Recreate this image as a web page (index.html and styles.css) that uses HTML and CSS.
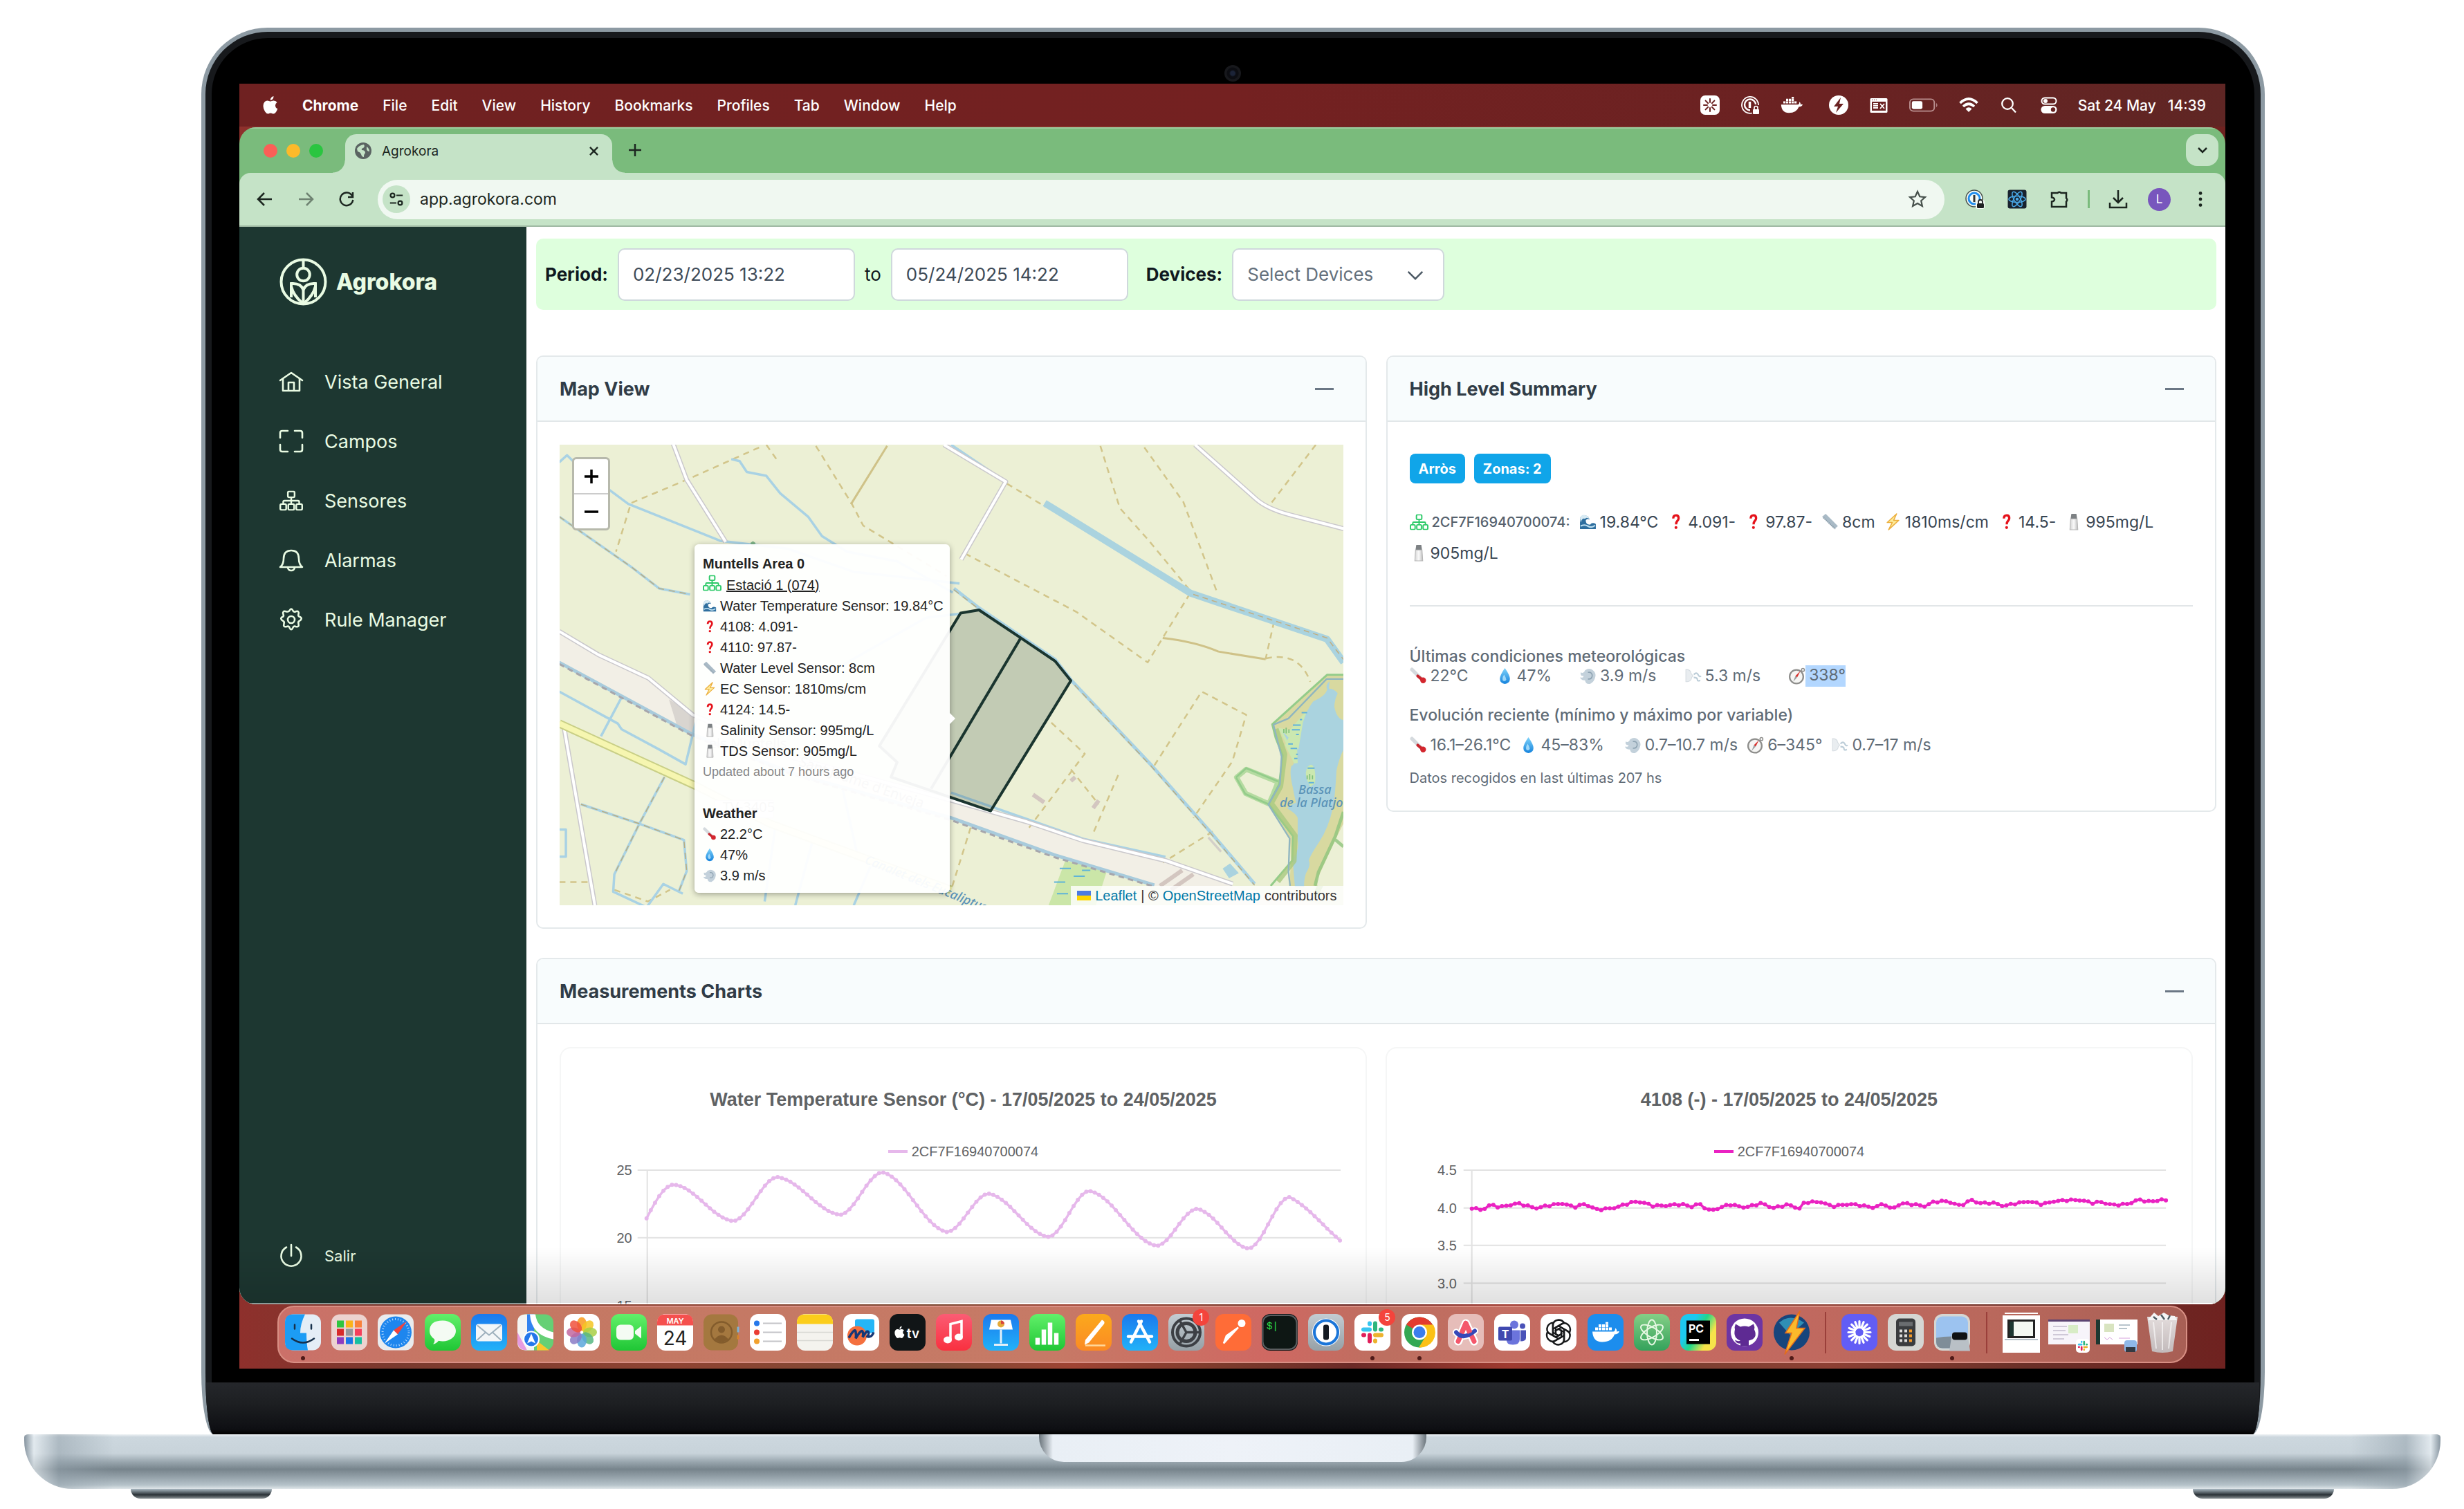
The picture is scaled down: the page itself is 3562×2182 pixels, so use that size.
FILE: index.html
```html
<!DOCTYPE html>
<html lang="es">
<head>
<meta charset="utf-8">
<title>Agrokora</title>
<link rel="stylesheet" href="styles.css">
</head>
<body>
<svg class="sprite" aria-hidden="true">
  <defs>
    <linearGradient id="g-drop" x1="0" y1="0" x2="0" y2="1"><stop offset="0" stop-color="#7fd3fa"/><stop offset="1" stop-color="#1583dd"/></linearGradient>
    <linearGradient id="g-metal" x1="0" y1="0" x2="1" y2="0"><stop offset="0" stop-color="#d4d4d4"/><stop offset=".5" stop-color="#fafafa"/><stop offset="1" stop-color="#bdbdbd"/></linearGradient>
    <linearGradient id="g-bin" x1="0" y1="0" x2="0" y2="1"><stop offset="0" stop-color="#e9e9ea"/><stop offset="1" stop-color="#c5c4c6"/></linearGradient>
    <symbol id="i-sitemap" viewBox="0 0 28 24"><g fill="none" stroke="currentColor" stroke-width="2"><rect x="10" y="1" width="8" height="7" rx="1.5"/><rect x="1" y="16" width="7" height="7" rx="1.5"/><rect x="10.500" y="16" width="7" height="7" rx="1.500"/><rect x="20" y="16" width="7" height="7" rx="1.500"/><path d="M14 8v8M4.500 16v-2.500q0-1.500 1.500-1.500h16q1.500 0 1.500 1.500V16"/></g></symbol>
    <symbol id="e-wave" viewBox="0 0 24 24"><path d="M1 8 Q2 2 8 3 Q14 4 14 9 Q11 7 9 10 Q9 16 15 16 Q18 12 23 15 L23 22 H1z" fill="#2f6f9f"/><path d="M1 7 Q3 1 9 3 Q13 4 14 8 Q10 5 8 8 Q4 6 2 13z" fill="#d8ebf4"/><path d="M2 18 Q7 15 12 18 T22 17" stroke="#bfe0f0" stroke-width="2" fill="none"/></symbol>
    <symbol id="e-q" viewBox="0 0 24 24"><path d="M8.500 7.500 Q8.500 3 12.500 3 Q16 3 16 7 Q16 9 14 11 Q12.500 12.500 12.500 15.500" fill="none" stroke="#e5121b" stroke-width="3.200"/><circle cx="12.300" cy="20" r="2" fill="#e5121b"/></symbol>
    <symbol id="e-ruler" viewBox="0 0 24 24"><path d="M1 5 L6 1 L23 18 L18 22z" fill="#a9bac6"/><path d="M3 6.500 L19.500 22" stroke="#8496a3" stroke-width="2" stroke-dasharray="1 1.500"/></symbol>
    <symbol id="e-bolt" viewBox="0 0 24 24"><path d="M17 1 L4 13 H11 L6 23 L20 10 H13z" fill="#fdeb9a" stroke="#ecb040" stroke-width="1.500" stroke-linejoin="round"/></symbol>
    <symbol id="e-salt" viewBox="0 0 24 24"><path d="M9 1 H16 L17 8 H8z" fill="#7d8184"/><path d="M8 8 H17 L18 23 H7z" fill="url(#g-metal)" stroke="#b5b5b5"/></symbol>
    <symbol id="e-thermo" viewBox="0 0 24 24"><path d="M3 3 L16 16" stroke="#d5dade" stroke-width="5" stroke-linecap="round"/><path d="M11 12 L17 17" stroke="#c9252d" stroke-width="4" stroke-linecap="round"/><circle cx="18.500" cy="18" r="4" fill="#d3262e"/></symbol>
    <symbol id="e-drop" viewBox="0 0 24 24"><path d="M12 1 Q19 11 19 16 A7 7 0 0 1 5 16 Q5 11 12 1z" fill="url(#g-drop)"/><path d="M11 10 Q8 14 9 18 Q12 21 14 17 Q13 13 11 10z" fill="#c9efff" opacity=".7"/></symbol>
    <symbol id="e-wind" viewBox="0 0 24 24"><path d="M8 4 Q14 0 19 4 Q24 8 22 14 Q21 20 15 23 Q9 24 8 18 Q2 18 1 14 Q6 15 6 12 Q1 12 2 7 Q6 9 8 4z" fill="#c3d1db"/><path d="M12 7 Q18 6 18 12 Q17 17 12 16" fill="none" stroke="#8ea3b2" stroke-width="1.500"/></symbol>
    <symbol id="e-face" viewBox="0 0 24 24"><path d="M2 3 Q9 3 9 8 L12 12 L10 14 Q10 19 4 20 H2z" fill="#e9edf0" stroke="#d5dce1"/><path d="M13 10 Q17 6 19 10 Q21 14 23 12 M13 14 Q18 14 18 17 T22 18" fill="none" stroke="#bccdd8" stroke-width="2"/></symbol>
    <symbol id="e-compass" viewBox="0 0 24 24"><circle cx="11.500" cy="13" r="9.500" fill="#f6f6f4" stroke="#8e8e8c" stroke-width="2.200"/><path d="M17 5 L12.500 14 L10 12z" fill="#d8302c"/><path d="M7 20 L12.500 14 L10 12z" fill="#9da0a2"/><circle cx="20.500" cy="3.500" r="2" fill="none" stroke="#8e8e8c" stroke-width="1.500"/></symbol>
    <symbol id="i-slack" viewBox="0 0 40 40"><g stroke-width="6" stroke-linecap="round" fill="none"><path d="M16 7v1M7 16h9" stroke="#36c5f0"/><path d="M24 7v9M32 16h1" stroke="#2eb67d"/><path d="M24 24h9M24 32v1" stroke="#ecb22e"/><path d="M16 24v9M7 24h1" stroke="#e01e5a"/></g></symbol>
    <symbol id="i-burst" viewBox="0 0 40 40"><g stroke="currentColor" stroke-width="3.200" stroke-linecap="round"><path d="M20 4v9M20 27v9M4 20h9M27 20h9M8.700 8.700l6.300 6.300M25 25l6.300 6.300M31.300 8.700L25 15M15 25l-6.300 6.300M13.900 5.200l3.400 8.300M22.700 26.500l3.400 8.300M5.200 13.900l8.300 3.400M26.500 22.700l8.300 3.400M26.100 5.200l-3.400 8.300M17.300 26.500l-3.400 8.300M34.800 13.900l-8.300 3.400M13.500 22.700l-8.300 3.400"/></g></symbol>
    <symbol id="i-docker" viewBox="0 0 40 30"><path d="M1 14h30q3 0 3-5q3 2 2 5q3-1 4 0q-2 4-7 4q-4 11-18 11Q2 29 1 14z" fill="currentColor"/><path d="M5 8h4v4H5zM10 8h4v4h-4zM15 8h4v4h-4zM20 8h4v4h-4zM25 8h4v4h-4zM10 3.500h4v4h-4zM15 3.500h4v4h-4zM20 3.500h4v4h-4zM20 0h4v3h-4z" fill="currentColor"/></symbol>
    <symbol id="i-apple" viewBox="0 0 22 26"><path d="M15.500 0Q15.600 3 14 4.600Q12.600 6.200 10.800 6Q10.700 3.600 12.200 2Q13.600 .400 15.500 0zM20.500 9Q18 10.600 18 13.400Q18 16.800 21.300 18.200Q20.600 20.500 19 22.900Q17.200 25.600 15.300 25.600Q14.200 25.600 13.200 25Q12.200 24.500 11.300 24.500Q10.200 24.500 9.100 25.100Q8.200 25.600 7.300 25.600Q5.200 25.600 3 22.300Q.500 18.500 .500 14.300Q.500 10.700 2.400 8.500Q4.100 6.500 6.500 6.500Q7.700 6.500 9 7.100Q10.200 7.600 10.900 7.600Q11.500 7.600 12.800 7Q14.400 6.400 15.800 6.500Q18.900 6.700 20.500 9z" fill="currentColor"/></symbol>
  </defs>
</svg>

<div class="laptop">
  <div class="lid">
    <span class="camera"></span>
    <div class="screen">
      <header class="menubar">
        <svg class="apple" viewBox="0 0 22 26"><use href="#i-apple"/></svg>
        <button class="menu strong">Chrome</button><button class="menu">File</button><button class="menu">Edit</button><button class="menu">View</button><button class="menu">History</button><button class="menu">Bookmarks</button><button class="menu">Profiles</button><button class="menu">Tab</button><button class="menu">Window</button><button class="menu">Help</button>
        <div class="status">
          <svg viewBox="0 0 28 28"><rect width="28" height="28" rx="7" fill="#fff"/><g stroke="#6a2222" stroke-width="2" stroke-linecap="round"><path d="M14 5v5M14 18v5M5 14h5M18 14h5M7.600 7.600l3.600 3.600M16.800 16.800l3.600 3.600M20.400 7.600l-3.600 3.600M11.200 16.800l-3.600 3.600"/></g></svg>
          <svg viewBox="0 0 28 28" fill="none" stroke="#fff"><path d="M17 25.500A12 12 0 1 1 26 14" stroke-width="1.800"/><path d="M14 21.500A8 8 0 1 1 22 13" stroke-width="2.500"/><path d="M13.500 9v9" stroke-width="3.500"/><rect x="18" y="20" width="9" height="7" rx="1" fill="#fff" stroke="none"/><path d="M20 20v-2a2.500 2.500 0 0 1 5 0v2" stroke-width="1.700"/></svg>
          <svg class="wide" viewBox="0 0 40 30" color="#fff"><use href="#i-docker"/></svg>
          <svg viewBox="0 0 28 28"><circle cx="14" cy="14" r="14" fill="#fff"/><path d="M17 3L7 16h6l-3 9 11-13h-6z" fill="#6a2222"/></svg>
          <svg viewBox="0 0 28 28"><path d="M3 4h22q1.500 0 1.500 1.500v18q0 1.500-1.500 1.500H3q-1.500 0-1.500-1.500v-18Q1.500 4 3 4z" fill="#fff"/><path d="M4 9h20v13H4z" fill="#6a2222"/><path d="M6 12h7M6 15h7M6 18h7M16 12l6 7M22 12l-6 7" stroke="#fff" stroke-width="1.800"/><path d="M4 6.500h7" stroke="#6a2222" stroke-dasharray="1.500 1.500"/></svg>
          <svg class="batt" viewBox="0 0 44 20"><rect x="1" y="1" width="37" height="18" rx="5" fill="none" stroke="#b98f8f" stroke-width="2"/><rect x="4" y="4" width="16" height="12" rx="2.500" fill="#fff"/><path d="M41 6.500q3 3.500 0 7z" fill="#b98f8f"/></svg>
          <svg viewBox="0 0 28 28" fill="none" stroke="#fff" stroke-width="3.600"><path d="M1.500 11Q14-1 26.500 11"/><path d="M6 16Q14 8.500 22 16"/><path d="M14 24l-4.500-4.500Q14 15 18.500 19.500z" fill="#fff" stroke="none"/></svg>
          <svg viewBox="0 0 28 28" fill="none" stroke="#fff" stroke-width="2.300"><circle cx="12" cy="12" r="7.800"/><path d="M18 18l6 6.500"/></svg>
          <svg viewBox="0 0 28 28"><rect x="3.500" y="3.500" width="21" height="9" rx="4.500" fill="none" stroke="#fff" stroke-width="2"/><circle cx="9" cy="8" r="3" fill="#fff"/><rect x="2.500" y="15" width="23" height="11" rx="5.500" fill="#fff"/><circle cx="20" cy="20.500" r="3.200" fill="#662222"/></svg>
        </div>
        <time class="clock"><span>Sat 24 May</span><span>14:39</span></time>
      </header>

      <section class="browser">
        <div class="tabbar">
          <div class="lights"><i class="light red"></i><i class="light amber"></i><i class="light green"></i></div>
          <div class="tab">
            <svg class="favicon" viewBox="0 0 24 24"><circle cx="12" cy="12" r="12" fill="#5b6462"/><path d="M3 9Q6 4 13 3Q15 6 12 8Q9 9 10 11Q15 11 15 15Q13 17 13 21Q10 21 9 17Q8 14 4 13z" fill="#c5e3c7"/><path d="M17 6Q21 9 21 13Q18 13 17 10z" fill="#c5e3c7"/></svg>
            <span class="tab-title">Agrokora</span>
            <button class="tab-close" aria-label="Close tab"><svg viewBox="0 0 14 14"><path d="M1 1l12 12M13 1L1 13"/></svg></button>
          </div>
          <button class="tab-new" aria-label="New tab"><svg viewBox="0 0 18 18"><path d="M9 0v18M0 9h18"/></svg></button>
          <button class="tab-search" aria-label="Search tabs"><svg viewBox="0 0 14 9"><path d="M1 1l6 6 6-6"/></svg></button>
        </div>
        <div class="toolbar">
          <button class="tool" aria-label="Back"><svg viewBox="0 0 24 24"><path d="M22 12H3M11 3l-9 9 9 9"/></svg></button>
          <button class="tool dim" aria-label="Forward"><svg viewBox="0 0 24 24"><path d="M2 12h19M13 3l9 9-9 9"/></svg></button>
          <button class="tool" aria-label="Reload"><svg viewBox="0 0 24 24"><path d="M20 7A9.300 9.300 0 1 0 21.300 13M21 2v7h-7"/></svg></button>
          <div class="urlbox">
            <span class="site"><svg viewBox="0 0 24 24"><circle cx="6" cy="6" r="3.200"/><path d="M12 6h10M2 18h10"/><circle cx="18" cy="18" r="3.200"/></svg></span>
            <input class="url" type="text" value="app.agrokora.com" aria-label="Address">
            <svg class="star" viewBox="0 0 26 26"><path d="M13 2l3.300 7.300 7.700.800-5.800 5.200 1.700 7.700L13 19l-6.900 4 1.700-7.700L2 10.100l7.700-.800z"/></svg>
          </div>
          <button class="tool ext" aria-label="Passwords"><svg viewBox="0 0 28 28"><circle cx="13" cy="13" r="12" fill="#f5faf6" stroke="#46504b" stroke-width="1.500"/><circle cx="13" cy="13" r="8" fill="none" stroke="#1f8df0" stroke-width="3"/><path d="M13 8v10" stroke="#333" stroke-width="3"/><rect x="15" y="15" width="13" height="13" rx="3" fill="#f5faf6" stroke="none"/><rect x="17" y="20" width="10" height="7" rx="1.500" fill="#202124" stroke="none"/><path d="M19 20v-2a3 3 0 0 1 6 0v2" stroke="#202124" stroke-width="1.800"/></svg></button>
          <button class="tool ext" aria-label="React tools"><svg viewBox="0 0 28 28"><rect x=".500" y=".500" width="27" height="27" rx="3" fill="#18222e" stroke="none"/><g stroke="#4aa9e8" stroke-width="1.500"><ellipse cx="14" cy="14" rx="12" ry="4.500"/><ellipse cx="14" cy="14" rx="12" ry="4.500" transform="rotate(60 14 14)"/><ellipse cx="14" cy="14" rx="12" ry="4.500" transform="rotate(120 14 14)"/></g><circle cx="14" cy="14" r="2.200" fill="#4aa9e8" stroke="none"/></svg></button>
          <button class="tool ext" aria-label="Extensions"><svg viewBox="0 0 28 28"><path d="M3 5h8.500a3 3 0 0 1 5 0H24v7.500a3 3 0 0 1 0 5V25H3v-7.500q4-.500 4-3t-4-3z"/></svg></button>
          <i class="tool-line"></i>
          <button class="tool ext" aria-label="Downloads"><svg viewBox="0 0 28 28"><path d="M14 1v17M7 12l7 7 7-7M2 19v7h24v-7"/></svg></button>
          <button class="avatar">L</button>
          <button class="tool dots" aria-label="More"><svg viewBox="0 0 8 28"><circle cx="4" cy="4" r="2.800"/><circle cx="4" cy="14" r="2.800"/><circle cx="4" cy="24" r="2.800"/></svg></button>
        </div>

        <div class="page">
          <aside class="sidebar">
            <a class="brand" href="#">
              <svg viewBox="0 0 69 69" fill="none" stroke="currentColor" stroke-width="4"><circle cx="34.500" cy="34.500" r="32"/><path d="M34.500 2v12M34.500 44v22"/><circle cx="34.500" cy="24" r="9.300"/><path d="M34.500 46Q31 36 17 37V57M34.500 46Q38 36 52 37V57M17 41Q20 54 33 65M52 41Q49 54 36 65"/></svg>
              <span>Agrokora</span>
            </a>
            <nav class="nav">
              <a href="#"><svg viewBox="0 0 34 34"><path d="M1 15L17 4l16 11M5 13v17h24V13M13 30V18h8v12"/></svg>Vista General</a>
              <a href="#"><svg viewBox="0 0 34 34"><path d="M1 12V5q0-3 3-3h8M22 2h8q3 0 3 3v7M33 22v7q0 3-3 3h-8M12 32H4q-3 0-3-3v-7"/></svg>Campos</a>
              <a href="#"><svg viewBox="0 0 28 24"><use href="#i-sitemap"/></svg>Sensores</a>
              <a href="#"><svg viewBox="0 0 34 34"><path d="M1 27Q6 23 6 15Q6 3 17 3T28 15Q28 23 33 27zM12 28q1 4 5 4t5-4"/></svg>Alarmas</a>
              <a href="#"><svg viewBox="0 0 34 34"><circle cx="17" cy="17" r="5"/><path d="M14.500 4q2.500-5 5 0 1 2.500 4 1.200 5.300-1.700 4 4-1 2.800 1.500 3.600 5.500 2.200 0 6-2.500 1-1.500 4 1.300 5.700-4 4.200-3-1.200-4 1.500-2.500 5.500-5 0-1-2.700-4-1.500-5.500 1.500-4-4.200 1-3-1.500-4-5.500-3.800 0-6Q6.500 12 5.500 9.200q-1.500-5.700 4-4 3.500 1 5-1.200z"/></svg>Rule Manager</a>
            </nav>
            <a class="logout" href="#"><svg viewBox="0 0 34 34"><path d="M17 1v16M10 4.500A14.500 14.500 0 1 0 24 4.500"/></svg>Salir</a>
          </aside>

          <main class="content">
            <form class="filters">
              <label class="strong" for="from">Period:</label>
              <input class="field" id="from" type="text" value="02/23/2025 13:22">
              <label for="until">to</label>
              <input class="field" id="until" type="text" value="05/24/2025 14:22">
              <label class="strong devices-label" for="devices">Devices:</label>
              <span class="select-wrap">
                <select class="field" id="devices"><option>Select Devices</option></select>
                <svg viewBox="0 0 26 16"><path d="M2 2l11 11L24 2"/></svg>
              </span>
            </form>

            <div class="cards">
              <section class="card">
                <header class="card-head"><h2>Map View</h2><button class="fold" aria-label="Collapse"></button></header>
                <div class="card-body">
                  <div class="map">
                    <svg class="tiles" viewBox="0 0 1132 665" preserveAspectRatio="xMidYMid slice">
                      <rect width="1132" height="665" fill="#ecf0d5"/>
                      <g class="shapes" transform="matrix(.8036 0 0 .5612 -49 -143)" fill="none" stroke-linejoin="round">
                        <path d="M61 735L135 795 220 860 300 950 480 1060 765 1170 900 1225 1000 1275 1150 1325 1290 1400 1440 1440H1240L1120 1385 950 1310 765 1215 480 1100 300 1000 61 815z" fill="#f2efe6"/>
                        <path d="M258 910l45 40v50l-30-20z" fill="#d9d5d0"/>
                        <path d="M970 1325l75 25-20 90H940z" fill="#cbe6a8"/>
                        <g stroke="#d2c58a" stroke-width="2.500" stroke-dasharray="9 7">
                          <path d="M420 262L290 345 190 405 163 530M433 255l22 45M522 258l65 150 20 55 150 130M865 355l70 60M1033 258l35 160 50 80 75 130M1112 262l70 140 60 230M1420 255l-80 150M790 535l200 150 128 130 75-175M1345 710l-15 95M1330 805q60-20 80 60M1130 1080l85-190 80 60-25 120-70 145M945 970l60 80-100 190M980 1090l50 90M1065 1105l-45 150M800 1240l-35 160M1235 1250l-90 80M61 1380h60M160 1400l60 30 40-30"/>
                        </g>
                        <path d="M650 258l-65 150M1145 752q60 10 100 35l85 20" stroke="#cfc288" stroke-width="3"/>
                        <g stroke="#a9d2e4" stroke-width="3.500">
                          <path d="M61 300l14-18 25 35 85 90 165 95 120 20 120 60 190 30M370 292l15 5 13 28 35 10 25 45 50 60 25 50 45 40 90 25 100 80M61 440l70 70 60 60 50 55 55 15M61 890l105 82 7 15 65 50 50 40 20-120M173 905l-37 100M100 1180l105 50 80 42 5 80-15 55M250 1110l-45 120-45 130-2 45 60 40 30-60 35 25M61 1245h12v70H61M450 1230l-20 200M515 1280l-30 160M620 1340l-30 100M570 1140l25 160M560 830l160-130 60-10M765 255l98 95-70 175"/>
                          <path d="M770 625l45 50 137 133 28 52 145 220 105 170 80 135" stroke-width="5"/>
                          <path d="M765 1150l140 70 100 50 145 45"/>
                        </g>
                        <path d="M61 440l70 70 60 60 50 55 55 15M100 1180l105 50 80 42 5 80-15 55M250 1110l-45 120-45 130M770 628l45 50 137 133 28 52 145 220 105 170 80 135" stroke="#b9ad80" stroke-width="1.500" stroke-dasharray="9 7"/>
                        <path d="M61 815L300 1000 480 1100 765 1215 950 1310 1130 1388" stroke="#a8cbdc" stroke-width="5"/>
                        <path d="M61 819L300 1004 480 1104 765 1221 950 1316 1130 1392" stroke="#a6a6ac" stroke-width="3" stroke-dasharray="8 6"/>
                        <path d="M933 405L1195 637 1440 755 1470 815" stroke="#aad3df" stroke-width="10"/>
                        <path d="M1200 640L1440 752 1470 808" stroke="#c2ae80" stroke-width="1.500" stroke-dasharray="8 6"/>
                        <g stroke="#cac8cc" stroke-width="7"><path d="M265 250l25 95 70 160M752 255l111 95-80 200M1203 255l110 140q20 25 60 40l97 36M70 985l55 455M61 735l70 60 90 60 80 95 180 110 285 110 135 55 100 48 150 52 120 60"/></g>
                        <g stroke="#fff" stroke-width="4"><path d="M265 250l25 95 70 160M752 255l111 95-80 200M1203 255l110 140q20 25 60 40l97 36M70 985l55 455M61 735l70 60 90 60 80 95 180 110 285 110 135 55 100 48 150 52 120 60"/></g>
                        <path d="M61 972L310 1135 440 1230 765 1400" stroke="#c9cf86" stroke-width="12"/><path d="M61 972L310 1135 440 1230 765 1400" stroke="#f6f6b0" stroke-width="8"/>
                        <path d="M340 1170h105v45H340z" fill="#fff" stroke="#ccc"/>
                        <path d="M960 1345h20M985 1365h20M950 1380h20M1000 1350h15M955 1410h20" stroke="#5fb4d8" stroke-width="2"/>
                        <path d="M912 1155l20 20M1020 1190l10-20M980 1120l8-10M1140 1390l40-40M1160 1400l40-40" stroke="#d3c6c0" stroke-width="6"/>
                        <path d="M404 508l5-5 5 5-5 7z" fill="#7db287"/>
                        <path d="M782 688L815 680 890 752 952 812 980 862 836 1197 657 1110 668 1072 636 1030z" fill="#1d3731" fill-opacity=".2" stroke="#1a352f" stroke-width="4"/>
                        <path d="M890 752L729 1140" stroke="#1a352f" stroke-width="4"/>
                      </g>
                      <g transform="matrix(.3333 0 0 .3333 831 317)" fill="none" stroke-linejoin="round">
                        <path d="M440 490L482 455 620 510 600 560 580 605 480 560z" stroke="#b4dba0" stroke-width="22"/>
                        <path d="M438 490L482 450 620 508M578 606L478 562 438 490" stroke="#93cc8a" stroke-width="8"/>
                        <path d="M595 260L832 46H903V690L795 930V960H670L675 850 672 760 580 605 625 520 635 400z" fill="#d8d9a0"/>
                        <path d="M850 830l53-140V790L795 1000H770z" fill="#b3d08b"/>
                        <path d="M903 690L868 760 790 930V960H903z" fill="#ecf0d5"/>
                        <path d="M620 275l50 10 70-80 45-10-60 120-15 110h-15z" fill="#cbe8b0"/>
                        <path d="M840 106q20-2 38 20-15 30-14 60 10 50 39 56V370q-20 40-30 90-5 100-15 160-20 90-60 150-40 60-45 80 10 20-12 55-10 30-8 60h-40l-10-120q30-40 22-80V665q-10-20-45-40 15-20 38-25-10-40-15-70-15-60-5-90 15 0 10-40-20-60-50-110 60 60 70 80l20-120q20-60 45-90 50-20 60-50-10-20 10-36z" fill="#aad3df"/>
                        <path d="M650 350l40 80 15-2-5-130-35 20z" fill="#cbe8b0"/>
                        <path d="M740 470q5-35 25-35 20 10 15 80l-20 15q-20-30-20-60z" fill="#cbe8b0"/>
                        <path d="M903 46H832L595 260 610 320 640 395 625 520 580 606 685 745 682 850 588 960" stroke="#93cc8a" stroke-width="9"/>
                        <path d="M612 280l38 110-18 140-40 72 103 140-5 110-70 90" stroke="#a9c97f" stroke-width="20" stroke-opacity=".8"/>
                        <path d="M903 640L868 745 795 900 780 960M868 760l35 30" stroke="#8fc47d" stroke-width="14" stroke-opacity=".8"/>
                        <path d="M903 64H830L665 235 600 262 635 400 628 520 578 608 670 755 665 900 672 960" stroke="#8fb5c0" stroke-width="7"/>
                        <path d="M722 210h24M714 240h10M684 264h34M680 284h34M698 304h12M664 345h20M674 365h28M698 390h8M690 408h14M748 450h30M752 513h24" stroke="#5fb0dc" stroke-width="6"/>
                        <path d="M645 280v18M655 275v25M667 282v16M746 482v16M757 475v25M769 482v16" stroke="#7fbf7a" stroke-width="5"/>
                        <path d="M380 885l32-22 38 42-42 22z" fill="#aad3df"/>
                        <path d="M318 750l55 62" stroke="#d3cfc8" stroke-width="10"/>
                      </g>
                      <g class="place">
                        <text x="216" y="438">els Muntells</text>
                        <text x="345" y="463" transform="rotate(19 345 463)">Sant Jaume d'Enveja</text>
                        <text x="236" y="530">TV-3405</text>
                        <g class="water"><text x="440" y="604" transform="rotate(22 440 604)">Canalet dels Eucaliptus</text><text x="1067" y="504">Bassa</text><text x="1040" y="523">de la Platjola</text></g>
                      </g>
                    </svg>
                    <div class="zoom"><button aria-label="Zoom in"><svg viewBox="0 0 20 20"><path d="M10 0v20M0 10h20"/></svg></button><button aria-label="Zoom out"><svg viewBox="0 0 20 20"><path d="M0 10h20"/></svg></button></div>
                    <div class="popup">
                      <p class="strong">Muntells Area 0</p>
                      <p><svg class="net" viewBox="0 0 28 24"><use href="#i-sitemap"/></svg><a href="#">Estació 1 (074)</a></p>
                      <p><svg class="em"><use href="#e-wave"/></svg>Water Temperature Sensor: 19.84°C</p>
                      <p><svg class="em"><use href="#e-q"/></svg>4108: 4.091-</p>
                      <p><svg class="em"><use href="#e-q"/></svg>4110: 97.87-</p>
                      <p><svg class="em"><use href="#e-ruler"/></svg>Water Level Sensor: 8cm</p>
                      <p><svg class="em"><use href="#e-bolt"/></svg>EC Sensor: 1810ms/cm</p>
                      <p><svg class="em"><use href="#e-q"/></svg>4124: 14.5-</p>
                      <p><svg class="em"><use href="#e-salt"/></svg>Salinity Sensor: 995mg/L</p>
                      <p><svg class="em"><use href="#e-salt"/></svg>TDS Sensor: 905mg/L</p>
                      <p class="updated">Updated about 7 hours ago</p>
                      <p class="strong weather">Weather</p>
                      <p><svg class="em"><use href="#e-thermo"/></svg>22.2°C</p>
                      <p><svg class="em"><use href="#e-drop"/></svg>47%</p>
                      <p><svg class="em"><use href="#e-wind"/></svg>3.9 m/s</p>
                    </div>
                    <div class="credit"><svg viewBox="0 0 20 14"><path d="M0 0h20v7H0z" fill="#4c7be1"/><path d="M0 7h20v7H0z" fill="#ffd500"/></svg><a href="#">Leaflet</a> | © <a href="#">OpenStreetMap</a> contributors</div>
                  </div>
                </div>
              </section>

              <section class="card">
                <header class="card-head"><h2>High Level Summary</h2><button class="fold" aria-label="Collapse"></button></header>
                <div class="card-body summary">
                  <div class="badges"><span>Arròs</span><span>Zonas: 2</span></div>
                  <div class="readings">
                    <span class="device"><svg class="net" viewBox="0 0 28 24"><use href="#i-sitemap"/></svg>2CF7F16940700074:</span>
                    <span><svg class="em"><use href="#e-wave"/></svg>19.84°C</span>
                    <span><svg class="em"><use href="#e-q"/></svg>4.091-</span>
                    <span><svg class="em"><use href="#e-q"/></svg>97.87-</span>
                    <span><svg class="em"><use href="#e-ruler"/></svg>8cm</span>
                    <span><svg class="em"><use href="#e-bolt"/></svg>1810ms/cm</span>
                    <span><svg class="em"><use href="#e-q"/></svg>14.5-</span>
                    <span><svg class="em"><use href="#e-salt"/></svg>995mg/L</span>
                    <span><svg class="em"><use href="#e-salt"/></svg>905mg/L</span>
                  </div>
                  <hr>
                  <h3>Últimas condiciones meteorológicas</h3>
                  <div class="now">
                    <span><svg class="em"><use href="#e-thermo"/></svg>22°C</span>
                    <span><svg class="em"><use href="#e-drop"/></svg>47%</span>
                    <span><svg class="em"><use href="#e-wind"/></svg>3.9 m/s</span>
                    <span><svg class="em"><use href="#e-face"/></svg>5.3 m/s</span>
                    <span class="picked"><svg class="em"><use href="#e-compass"/></svg><mark>338°</mark></span>
                  </div>
                  <h3>Evolución reciente (mínimo y máximo por variable)</h3>
                  <div class="range">
                    <span><svg class="em"><use href="#e-thermo"/></svg>16.1–26.1°C</span>
                    <span><svg class="em"><use href="#e-drop"/></svg>45–83%</span>
                    <span class="apart"><svg class="em"><use href="#e-wind"/></svg>0.7–10.7 m/s</span>
                    <span><svg class="em"><use href="#e-compass"/></svg>6–345°</span>
                    <span><svg class="em"><use href="#e-face"/></svg>0.7–17 m/s</span>
                  </div>
                  <p class="note">Datos recogidos en last últimas 207 hs</p>
                </div>
              </section>
            </div>

            <section class="card">
              <header class="card-head"><h2>Measurements Charts</h2><button class="fold" aria-label="Collapse"></button></header>
              <div class="card-body charts">
                <figure class="chart">
                  <figcaption>Water Temperature Sensor (°C) - 17/05/2025 to 24/05/2025</figcaption>
                  <div class="legend"><i class="key lilac"></i>2CF7F16940700074</div>
                  <svg class="plot" viewBox="0 0 1166 260" preserveAspectRatio="xMinYMin">
                    <path class="grid" d="M111 20H1130M111 118H1130M111 217H1130M125 20V260"/>
                    <g class="ticks"><text x="103" y="27">25</text><text x="103" y="125">20</text><text x="103" y="224">15</text></g>
                    <g id="temperature" class="series lilac"></g>
                  </svg>
                </figure>
                <figure class="chart">
                  <figcaption>4108 (-) - 17/05/2025 to 24/05/2025</figcaption>
                  <div class="legend"><i class="key magenta"></i>2CF7F16940700074</div>
                  <svg class="plot" viewBox="0 0 1166 260" preserveAspectRatio="xMinYMin">
                    <path class="grid" d="M111 20H1129M111 75H1129M111 129H1129M111 184H1129M123 20V260"/>
                    <g class="ticks"><text x="101" y="27">4.5</text><text x="101" y="82">4.0</text><text x="101" y="136">3.5</text><text x="101" y="191">3.0</text></g>
                    <g id="level" class="series magenta"></g>
                  </svg>
                </figure>
              </div>
            </section>
          </main>
        </div>
      </section>

      <footer class="dock">
        <button class="app on" aria-label="Finder"><svg viewBox="0 0 52 52"><rect width="52" height="52" rx="12" fill="#e4edf6"/><path d="M12 0h17q-7 14-7 27h9q0 14 2 25H12Q0 52 0 40V12Q0 0 12 0z" fill="#1c9cf5"/><path d="M14 15v6M38 15v6M10 35q16 12 32 0" fill="none" stroke="#17304b" stroke-width="2.500" stroke-linecap="round"/></svg></button>
        <button class="app" aria-label="Launchpad"><svg viewBox="0 0 52 52"><rect width="52" height="52" rx="12" fill="#ecd3d0"/><path d="M8 9h10v10H8z" fill="#2fc53f"/><path d="M21 9h10v10H21z" fill="#fbb31b"/><path d="M34 9h10v10H34z" fill="#f9813b"/><path d="M8 21h10v10H8z" fill="#d82a2a"/><path d="M21 21h10v10H21z" fill="#96969b"/><path d="M34 21h10v10H34z" fill="#f5405b"/><path d="M8 33h10v10H8z" fill="#8d3bc0"/><path d="M21 33h10v10H21z" fill="#1b76e8"/><path d="M34 33h10v10H34z" fill="#19bfa0"/></svg></button>
        <button class="app" aria-label="Safari"><svg viewBox="0 0 52 52"><rect width="52" height="52" rx="12" fill="#e9ebee"/><circle cx="26" cy="26" r="23" fill="#1e86ee"/><circle cx="26" cy="26" r="19" fill="none" stroke="#bfe0ff" stroke-width="3" stroke-dasharray="1 3"/><path d="M42 10L29 29l-6-6z" fill="#f2433d"/><path d="M10 42l13-19 6 6z" fill="#fff"/></svg></button>
        <button class="app lime" aria-label="Messages"><svg viewBox="0 0 52 52"><path d="M26 9c11 0 19 7 19 15s-8 15-19 15q-3 0-6-.800Q16 43 12 43q3-3 2-7Q7 31 7 24 7 9 26 9z" fill="#f4fbf3"/></svg></button>
        <button class="app azure" aria-label="Mail"><svg viewBox="0 0 52 52"><rect x="7" y="14" width="38" height="25" rx="4" fill="#f3f6f8"/><path d="M9 16l17 14 17-14M9 37l12-11M43 37L31 26" fill="none" stroke="#9eb0bd" stroke-width="2"/></svg></button>
        <button class="app" aria-label="Maps"><svg viewBox="0 0 52 52"><rect width="52" height="52" rx="12" fill="#65d075"/><path d="M12 0h12v52H12Q0 52 0 40V12Q0 0 12 0z" fill="#f4f4f2"/><path d="M14 0h10v30H14z" fill="#3283f0"/><path d="M0 26l14 26q-14 0-14-14z" fill="#e59be0"/><path d="M26 0q2 20 26 26v10Q20 30 18 0z" fill="#fff"/><path d="M28 38l18 14H28z" fill="#fbc72d"/><circle cx="20" cy="36" r="12" fill="#fff"/><circle cx="20" cy="36" r="10" fill="#2477ea"/><path d="M20 28l6 14-6-3-6 3z" fill="#fff"/></svg></button>
        <button class="app white" aria-label="Photos"><svg viewBox="0 0 52 52"><g fill-opacity=".85"><ellipse cx="26" cy="14" rx="7" ry="10" fill="#f99a1c"/><ellipse cx="26" cy="14" rx="7" ry="10" fill="#f4c623" transform="rotate(45 26 26)"/><ellipse cx="26" cy="14" rx="7" ry="10" fill="#a8cf45" transform="rotate(90 26 26)"/><ellipse cx="26" cy="14" rx="7" ry="10" fill="#57b783" transform="rotate(135 26 26)"/><ellipse cx="26" cy="14" rx="7" ry="10" fill="#5aa7dc" transform="rotate(180 26 26)"/><ellipse cx="26" cy="14" rx="7" ry="10" fill="#8a7bc5" transform="rotate(225 26 26)"/><ellipse cx="26" cy="14" rx="7" ry="10" fill="#c2679f" transform="rotate(270 26 26)"/><ellipse cx="26" cy="14" rx="7" ry="10" fill="#f0513c" transform="rotate(315 26 26)"/></g></svg></button>
        <button class="app lime" aria-label="FaceTime"><svg viewBox="0 0 52 52"><rect x="8" y="15" width="25" height="22" rx="6" fill="#f4fbf3"/><path d="M35 24l9-7v18l-9-7z" fill="#f4fbf3"/></svg></button>
        <button class="app white" aria-label="Calendar"><svg viewBox="0 0 52 52"><path d="M12 0h28q12 0 12 12v4H0v-4Q0 0 12 0z" fill="#f5504e"/><text class="may" x="26" y="13">MAY</text><text class="day" x="26" y="44">24</text></svg></button>
        <button class="app" aria-label="Contacts"><svg viewBox="0 0 52 52"><rect width="50" height="52" rx="12" fill="#a4783f"/><circle cx="26" cy="26" r="15" fill="none" stroke="#835c2c" stroke-width="2.500"/><circle cx="26" cy="22" r="5" fill="#835c2c"/><path d="M16 36q10-12 20 0-10 8-20 0z" fill="#835c2c"/><path d="M50 18v8" stroke="#7fb3d6" stroke-width="3"/><path d="M50 30v6" stroke="#d8842b" stroke-width="3"/></svg></button>
        <button class="app white" aria-label="Reminders"><svg viewBox="0 0 52 52"><path d="M19 13h27M19 26h27M19 39h27" stroke="#c4c4c8" stroke-width="2"/><circle cx="10" cy="13" r="4" fill="#2778ea"/><circle cx="10" cy="26" r="4" fill="#ea3d35"/><circle cx="10" cy="39" r="4" fill="#f2a12e"/></svg></button>
        <button class="app cream" aria-label="Notes"><svg viewBox="0 0 52 52"><path d="M12 0h28q12 0 12 12v2H0v-2Q0 0 12 0z" fill="#fbcd1b"/><path d="M0 26h52M0 38h52" stroke="#d8d8d3" stroke-width="1.500"/></svg></button>
        <button class="app white" aria-label="Freeform"><svg viewBox="0 0 52 52"><rect x="17" y="7" width="28" height="20" rx="3" fill="#25b6f6"/><circle cx="20" cy="31" r="14" fill="#f4703f"/><path d="M8 34q9-15 10-9t0 10q8-14 10-10t0 8q6-10 8-8t-1 7q6 2 9-6" fill="none" stroke="#163776" stroke-width="3.500"/></svg></button>
        <button class="app black" aria-label="TV"><svg viewBox="0 0 52 52"><path transform="translate(7 17) scale(.68)" d="M15.500 0Q15.600 3 14 4.600Q12.600 6.200 10.800 6Q10.700 3.600 12.200 2Q13.600 .400 15.500 0zM20.500 9Q18 10.600 18 13.400Q18 16.800 21.300 18.200Q20.600 20.500 19 22.900Q17.200 25.600 15.300 25.600Q14.200 25.600 13.200 25Q12.200 24.500 11.300 24.500Q10.200 24.500 9.100 25.100Q8.200 25.600 7.300 25.600Q5.200 25.600 3 22.300Q.500 18.500 .500 14.300Q.500 10.700 2.400 8.500Q4.100 6.500 6.500 6.500Q7.700 6.500 9 7.100Q10.200 7.600 10.900 7.600Q11.500 7.600 12.800 7Q14.400 6.400 15.800 6.500Q18.900 6.700 20.500 9z" fill="#fff"/><text class="tv" x="34" y="34">tv</text></svg></button>
        <button class="app rose" aria-label="Music"><svg viewBox="0 0 52 52"><path d="M21 37V14l16-4v23" fill="none" stroke="#fff" stroke-width="3.500"/><ellipse cx="17" cy="37" rx="6" ry="5" fill="#fff"/><ellipse cx="33" cy="33" rx="6" ry="5" fill="#fff"/></svg></button>
        <button class="app azure" aria-label="Keynote"><svg viewBox="0 0 52 52"><path d="M12 8h28l3 14H9z" fill="#fff"/><path d="M26 22v20M16 44h20" stroke="#e5f0f8" stroke-width="3"/><circle cx="26" cy="14" r="5" fill="#e4aa3a"/><path d="M26 14V9a5 5 0 0 1 5 5z" fill="#d7443e"/></svg></button>
        <button class="app lime" aria-label="Numbers"><svg viewBox="0 0 52 52"><path d="M12 44V34M21 44V22M30 44V12M39 44V27" stroke="#fff" stroke-width="6.500"/></svg></button>
        <button class="app orange" aria-label="Pages"><svg viewBox="0 0 52 52"><path d="M38 8q5 2 3 6L19 41l-6 3 1-7z" fill="#fff"/><path d="M14 45h29" stroke="#ffd79a" stroke-width="2.500"/></svg></button>
        <button class="app azure" aria-label="App Store"><svg viewBox="0 0 52 52"><path d="M28 10L13 40M24 10l16 30M9 32h34" stroke="#fff" stroke-width="4.500" stroke-linecap="round"/></svg></button>
        <button class="app gray" aria-label="Settings"><svg viewBox="0 0 52 52"><circle cx="26" cy="26" r="20" fill="none" stroke="#3c3f44" stroke-width="4"/><circle cx="26" cy="26" r="13" fill="none" stroke="#3c3f44" stroke-width="5"/><path d="M26 26h18M26 26l-9-16M26 26l-9 16" stroke="#3c3f44" stroke-width="3.500"/></svg><b class="badge">1</b></button>
        <button class="app coral" aria-label="Postman"><svg viewBox="0 0 52 52"><path d="M33 19L12 42l4-11z" fill="#fff" stroke="#fff" stroke-width="2.500"/><circle cx="38" cy="13" r="5.500" fill="#fff"/></svg></button>
        <button class="app black" aria-label="Terminal"><svg viewBox="0 0 52 52"><rect x="1.500" y="1.500" width="49" height="49" rx="11" fill="#0e1714" stroke="#5b5e60" stroke-width="2"/><text class="prompt" x="7" y="21">$|</text></svg></button>
        <button class="app gray" aria-label="1Password"><svg viewBox="0 0 52 52"><circle cx="26" cy="26" r="20" fill="#fff"/><circle cx="26" cy="26" r="17" fill="none" stroke="#1a75d8" stroke-width="4"/><rect x="22" y="15" width="8" height="22" rx="3" fill="#141a22"/></svg></button>
        <button class="app white on" aria-label="Slack"><svg viewBox="-6 -6 52 52"><use href="#i-slack" width="40" height="40"/></svg><b class="badge">5</b></button>
        <button class="app white on" aria-label="Chrome"><svg viewBox="0 0 52 52"><circle cx="26" cy="26" r="22" fill="#34a853"/><path d="M26 26L7 15A22 22 0 0 1 45 15z" fill="#e33b2e"/><path d="M26 15h20A22 22 0 0 1 25 48L36 30z" fill="#fbc116"/><circle cx="26" cy="26" r="11" fill="#fff"/><circle cx="26" cy="26" r="8.500" fill="#3b7ded"/></svg></button>
        <button class="app blush" aria-label="Arc"><svg viewBox="0 0 52 52"><path d="M15 39L26 13l12 26" fill="none" stroke="#fff" stroke-width="12" stroke-linejoin="round" stroke-linecap="round"/><path d="M12 26q10 12 27-2" fill="none" stroke="#fff" stroke-width="10" stroke-linecap="round"/><path d="M15 39L26 13l12 26" fill="none" stroke="#f4576b" stroke-width="7" stroke-linejoin="round" stroke-linecap="round"/><path d="M12 26q10 12 27-2" fill="none" stroke="#3648b8" stroke-width="6" stroke-linecap="round"/><path d="M20 27L26 13l6 14" fill="none" stroke="#f4576b" stroke-width="7" stroke-linejoin="round"/></svg></button>
        <button class="app white" aria-label="Teams"><svg viewBox="0 0 52 52"><circle cx="29" cy="15" r="6" fill="#6b74dc"/><circle cx="41" cy="17" r="4" fill="#4a52b8"/><path d="M18 23h19v13q0 8-10 8t-9-8z" fill="#6b74dc"/><path d="M38 23h8v11q0 5-8 5z" fill="#4a52b8"/><rect x="6" y="18" width="20" height="20" rx="2" fill="#4049b0"/><text class="teams" x="16" y="34">T</text></svg></button>
        <button class="app white" aria-label="ChatGPT"><svg viewBox="0 0 52 52"><g fill="none" stroke="#16181a" stroke-width="2.400"><path id="petal" d="M18 31V16q0-7 8-8 5 0 8 4L22 19v11"/><use href="#petal" transform="rotate(60 26 26)"/><use href="#petal" transform="rotate(120 26 26)"/><use href="#petal" transform="rotate(180 26 26)"/><use href="#petal" transform="rotate(240 26 26)"/><use href="#petal" transform="rotate(300 26 26)"/></g></svg></button>
        <button class="app docker" aria-label="Docker"><svg viewBox="-6 -11 52 52" color="#fff"><use href="#i-docker" width="40" height="30"/></svg></button>
        <button class="app atom" aria-label="Atom"><svg viewBox="0 0 52 52" fill="none" stroke="#e6f8e3" stroke-width="2"><ellipse cx="26" cy="26" rx="18" ry="7" transform="rotate(30 26 26)"/><ellipse cx="26" cy="26" rx="18" ry="7" transform="rotate(90 26 26)"/><ellipse cx="26" cy="26" rx="18" ry="7" transform="rotate(150 26 26)"/></svg></button>
        <button class="app pycharm" aria-label="PyCharm"><svg viewBox="0 0 52 52"><rect x="9" y="9" width="34" height="34" fill="#000"/><text class="pc" x="12" y="26">PC</text><path d="M13 37h14" stroke="#fff" stroke-width="3"/></svg></button>
        <button class="app purple" aria-label="GitHub"><svg viewBox="0 0 52 52"><circle cx="26" cy="26" r="20" fill="#fff"/><path d="M13 14l7 4q6-2 12 0l7-4q2 4 1 8 6 13-8 16v8H20v-4q-6 1-8-5 5 3 8 1-11-4-8-16-1-4 1-8z" fill="#5e2a93"/></svg></button>
        <button class="app on" aria-label="Thunder"><svg viewBox="0 0 52 52"><circle cx="26" cy="26" r="26" fill="#17457c"/><path d="M8 12q16-14 36 0L24 30z" fill="#2f8fb5"/><path d="M38-5L17 27h9L16 58l29-38H33z" fill="#fbb92b" stroke="#e36c1d" stroke-width="1.500"/></svg></button>
        <i class="dock-line"></i>
        <button class="app indigo" aria-label="Claude"><svg viewBox="-6 -6 52 52" color="#fff"><use href="#i-burst" width="40" height="40"/></svg></button>
        <button class="app silver" aria-label="Calculator"><svg viewBox="0 0 52 52"><rect x="12" y="6" width="28" height="40" rx="5" fill="#3a3c3f"/><path d="M16 11h20v6H16z" fill="#6a6d70"/><path d="M17 24h4M24 24h4M17 31h4M24 31h4M17 38h4M24 38h4" stroke="#ddd" stroke-width="4"/><path d="M31 24h4M31 31h4M31 38h4" stroke="#f39a2b" stroke-width="4"/></svg></button>
        <button class="app silver on" aria-label="Preview"><svg viewBox="0 0 52 52"><rect x="3" y="3" width="46" height="46" rx="9" fill="#9cc3f0"/><path d="M3 34q20-4 46 0v6q0 9-9 9H12q-9 0-9-9z" fill="#7f8d98"/><path d="M26 27h22l4 26H22z" fill="#b9c0c6"/><rect x="26" y="26" width="22" height="11" rx="4" fill="#101214"/></svg></button>
        <i class="dock-line"></i>
        <span class="thumb"><svg viewBox="0 0 54 58"><path d="M3 0h48v2H3zM0 4h54v54H0z" fill="#fff"/><path d="M7 10h40v27H7z" fill="#222"/><path d="M10 13h34v21H10z" fill="#f4f8f2"/><path d="M10 13h6v21h-6z" fill="#1d3731"/><path d="M3 39h48" stroke="#b7c1c8" stroke-width="2"/></svg></span>
        <span class="thumb"><svg viewBox="0 0 54 58"><path d="M-3 10h60v36H-3z" fill="#f7f4fa"/><path d="M-3 10h60v3H-3z" fill="#5c4472"/><path d="M4 20h20M4 26h18M4 32h22M4 38h16" stroke="#cfc9d8" stroke-width="2"/><path d="M26 18h14v12H26z" fill="#d8ecc6"/><rect x="37" y="38" width="20" height="20" rx="5" fill="#fff"/><use href="#i-slack" x="38" y="39" width="18" height="18"/></svg></span>
        <span class="thumb"><svg viewBox="0 0 54 58"><path d="M-3 10h60v36H-3z" fill="#fff"/><path d="M-3 10h6v36h-6z" fill="#1d3731"/><path d="M9 16h14v12H9z" fill="#d8e4c0"/><path d="M30 18h16M30 23h12" stroke="#b8c4cc" stroke-width="2"/><path d="M9 36l4 3 4-3 4 3M30 37h16" fill="none" stroke="#d6a2dd"/><rect x="38" y="40" width="18" height="17" rx="4" fill="#8fb8e8"/><path d="M40 50h14v7H40z" fill="#333a42"/></svg></span>
        <button class="thumb bin" aria-label="Trash"><svg viewBox="0 0 46 58"><path d="M1 6h44l-7 50q-15 4-30 0z" fill="url(#g-bin)" fill-opacity=".9"/><path d="M4 8L11 0l6 5 8-5 7 4 9 1 3 6H2z" fill="#f5f5f5"/><path d="M10 6l5 4M21 3l5 7M34 4l-3 6" stroke="#4c5a62" stroke-width="2.500"/><path d="M10 14l4 38M23 14v40M36 14l-4 38" stroke="#fff" stroke-opacity=".6" stroke-width="2"/></svg></button>
      </footer>
    </div>
    <div class="chin"></div>
  </div>
  <div class="base"><div class="notch"></div></div>
  <div class="feet"><i></i><i></i></div>
</div>
<script src="app.js"></script>
</body>
</html>
```
FILE: app.js
```js
// Draws each series as a line with a dot on every hourly sample.
const NS = "http://www.w3.org/2000/svg";

function drawSeries(id, samples, radius) {
  const group = document.getElementById(id);
  const line = document.createElementNS(NS, "polyline");
  line.setAttribute("points", samples.map(p => p.join(",")).join(" "));
  group.appendChild(line);
  for (const [x, y] of samples) {
    const dot = document.createElementNS(NS, "circle");
    dot.setAttribute("cx", x);
    dot.setAttribute("cy", y);
    dot.setAttribute("r", radius);
    group.appendChild(dot);
  }
}

function resample(keys, count, ease) {
  const out = [];
  const first = keys[0][0];
  const last = keys[keys.length - 1][0];
  let k = 0;
  for (let i = 0; i < count; i++) {
    const x = first + (last - first) * i / (count - 1);
    while (k < keys.length - 2 && x > keys[k + 1][0]) k++;
    const t = (x - keys[k][0]) / (keys[k + 1][0] - keys[k][0]);
    const y = keys[k][1] + (keys[k + 1][1] - keys[k][1]) * ease(t, k, keys.length - 2);
    out.push([+x.toFixed(1), +y.toFixed(1)]);
  }
  return out;
}

// Daily temperature highs and lows.
const daily = [[124, 90], [164, 41], [250, 94], [313, 30], [405, 85], [465, 23], [560, 110], [619, 54], [707, 117], [765, 50], [864, 130], [921, 76], [997, 134], [1055, 59], [1129, 122]];
drawSeries("temperature", resample(daily, 165, (t, k, end) => {
  if (k === 0) return Math.sin(t * Math.PI / 2);
  if (k === end) return 0.5 * t + 0.5 * t * (2 * t - t * t);
  return 0.8 * (1 - Math.cos(t * Math.PI)) / 2 + 0.2 * t;
}), 3);

const level = [[123, 75], [137, 78], [150, 70], [163, 74], [188, 68], [215, 75], [255, 68], [271, 74], [287, 69], [306, 78], [332, 74], [358, 66], [369, 66], [385, 72], [428, 70], [444, 73], [450, 68], [468, 79], [496, 70], [520, 74], [544, 68], [560, 75], [582, 70], [599, 76], [605, 67], [630, 66], [645, 73], [669, 69], [705, 74], [721, 69], [731, 77], [745, 68], [780, 72], [793, 66], [813, 65], [831, 72], [848, 63], [858, 68], [882, 68], [894, 72], [930, 65], [950, 70], [966, 65], [1006, 63], [1022, 68], [1034, 66], [1055, 71], [1075, 69], [1087, 63], [1107, 66], [1124, 62], [1129, 65]];
drawSeries("level", resample(level, 162, t => t).map(([x, y], i) => [x, y + (i % 3 === 0 ? 1 : i % 2 ? -1 : 0)]), 3);
```
FILE: styles.css
```css
* { box-sizing: border-box; }
body { margin: 0; background: #fff; color: #222b36; font-family: Inter, "Noto Sans", sans-serif; }
button { font: inherit; color: inherit; background: none; border: 0; padding: 0; }
a { color: inherit; text-decoration: none; }
h2, h3, p, figure { margin: 0; }
svg { display: block; overflow: visible; }
.sprite { position: absolute; width: 0; height: 0; }
.strong { font-weight: 700; }

/* laptop body */
.laptop { height: 100vh; padding: 40px 34px 15px 35px; display: flex; flex-direction: column; }
.lid { position: relative; flex: 1; min-height: 0; margin: 0 254px 0 256px; padding: 75px 51px 0 49px; display: flex; flex-direction: column; background: #000; border: 6px solid #8d9aa3; border-bottom: 0; border-radius: 96px 96px 18px 18px / 96px 96px 90px 90px; box-shadow: inset 0 0 0 9px #17191c; overflow: hidden; }
.camera { position: absolute; top: 48px; left: 50%; width: 24px; height: 24px; margin-left: -13px; border-radius: 50%; background: radial-gradient(circle, #1b2337 0 3px, #0c0d12 5px 8px, #17181c 9px); }
.chin { height: 75px; margin: 20px -49px 0; background: linear-gradient(#25272b, #1d1f22 40%, #0e0f13 90%, #000); }
.base { height: 79px; display: flex; justify-content: center; border-radius: 6px 6px 70px 70px / 4px 4px 70px 70px; background: linear-gradient(90deg, #8795a0 0, #edf3f7aa 14px, #93a1ab88 50px, #fff0 130px, #fff0 calc(100% - 130px), #93a1ab88 calc(100% - 50px), #edf3f7aa calc(100% - 14px), #8795a0 100%), linear-gradient(#eef2f4 0, #ccd7de 5%, #c8d3da 35%, #9aa7af 50%, #77848c 64%, #8f9ca4 76%, #b6c3ca 93%, #dfe6e9 100%); }
.notch { width: 560px; height: 40px; border-radius: 0 0 36px 36px; background: linear-gradient(90deg, #6a747b, #e9eff5 20px, #eef2f8 50%, #e9eff5 calc(100% - 20px), #6a747b); }
.feet { height: 14px; padding: 0 154px; display: flex; justify-content: space-between; }
.feet i { width: 204px; border-radius: 0 0 14px 14px; background: linear-gradient(#a8b7c0, #2a3136 60%, #8a9194); }

/* desktop */
.screen { flex: 1; min-height: 0; display: flex; flex-direction: column; background: linear-gradient(90deg, #8e302c, #7a3a2e 8%, #8f4433 22%, #7c4a34 35%, #a04434 42%, #7b3a2c 50%, #6b2a27 56%, #a03a30 64%, #7a4032 72%, #8e4034 80%, #6b3028 90%, #6f2220); }
.menubar { height: 62px; padding: 0 28px 0 34px; display: flex; align-items: center; gap: 35px; background: linear-gradient(90deg, #6f2121, #742121 50%, #6a2222 80%, #5f2624); color: #fff; font-size: 21px; font-weight: 500; }
.menubar .strong { font-weight: 700; }
.apple { width: 22px; height: 26px; }
.status { margin-left: auto; display: flex; align-items: center; gap: 30px; }
.status svg { width: 28px; height: 28px; }
.status .wide { width: 32px; height: 26px; margin-right: 8px; }
.status .batt { width: 42px; height: 20px; }
.clock { display: flex; gap: 17px; margin-left: -7px; }

.browser { flex: 1; min-height: 0; display: flex; flex-direction: column; margin-top: 1px; border-radius: 24px; overflow: hidden; background: #7abb7c; }
.tabbar { height: 66px; padding: 10px 10px 0 35px; display: flex; align-items: flex-start; color: #1c2620; box-shadow: inset 0 2px #9dcb9f; }
.lights { display: flex; gap: 13px; margin: 14px 32px 0 0; }
.light { width: 20px; height: 20px; border-radius: 50%; }
.light.red { background: #fb5f57; }
.light.amber { background: #fcba2a; }
.light.green { background: #2ac540; }
.tab { position: relative; width: 386px; height: 56px; padding: 0 20px 8px 14px; display: flex; align-items: center; gap: 15px; background: #c5e3c7; border-radius: 16px 16px 0 0; font-size: 19px; }
.tab::before, .tab::after { content: ""; position: absolute; bottom: 0; width: 18px; height: 18px; }
.tab::before { right: 100%; background: radial-gradient(circle at 0 0, #fff0 17px, #c5e3c7 18px); }
.tab::after { left: 100%; background: radial-gradient(circle at 100% 0, #fff0 17px, #c5e3c7 18px); }
.favicon { width: 24px; height: 24px; }
.tab-close { margin-left: auto; }
.tab-close svg { width: 13px; height: 13px; }
.tab-new { margin: 14px 0 0 24px; }
.tab-new svg { width: 18px; height: 18px; }
.tabbar button path { fill: none; stroke: #1c2620; stroke-width: 2.5; }
.tab-search { width: 47px; height: 46px; margin-left: auto; display: grid; place-items: center; background: #c5e3c7; border-radius: 16px; }
.tab-search svg { width: 14px; height: 9px; }
.toolbar { height: 78px; padding: 0 32px 0 25px; display: flex; align-items: center; gap: 33px; background: #c5e3c7; border-radius: 16px 16px 0 0; border-bottom: 2px solid #9fb9a3; }
.tool svg { width: 24px; height: 24px; fill: none; stroke: #1c2620; stroke-width: 2.5; }
.tool:first-child, .tool:nth-child(2), .tool:nth-child(3) { width: 26px; }
.tool.dim { opacity: .5; }
.tool.ext svg { width: 28px; height: 28px; }
.tool.dots svg { width: 8px; fill: #1c2620; stroke: none; }
.tool-line { width: 3px; height: 26px; margin: 0 -6px; background: #7abb7c; }
.urlbox { flex: 1; height: 57px; margin: 0 -3px 0 -2px; padding: 0 26px 0 7px; display: flex; align-items: center; gap: 14px; background: #f0f8f1; border-radius: 29px; }
.site { width: 40px; height: 40px; display: grid; place-items: center; border-radius: 50%; background: #c5e3c7; }
.site svg { width: 22px; height: 22px; fill: none; stroke: #1c2620; stroke-width: 2.4; }
.url { flex: 1; border: 0; background: none; padding: 0; font: 23px Inter, sans-serif; color: #1c2620; }
.star { width: 26px; height: 26px; fill: none; stroke: #46504b; stroke-width: 2.2; }
.avatar { width: 33px; height: 33px; margin: 0 6px 0 -4px; border-radius: 50%; background: #7856bd; color: #fff; font-size: 17px; }

/* app */
.page { position: relative; flex: 1; min-height: 0; display: flex; overflow: hidden; background: #fff; }
.page::after { content: ""; position: absolute; left: 0; right: 0; bottom: 0; height: 80px; background: linear-gradient(#0000, #0000001f); border-bottom: 2px solid #ffffff80; pointer-events: none; }
.sidebar { width: 415px; padding: 45px 0 0 58px; display: flex; flex-direction: column; background: #1d3731; color: #e9fbe3; }
.brand { display: flex; align-items: center; gap: 13px; font-size: 32px; font-weight: 800; }
.brand svg { width: 69px; height: 69px; }
.nav { margin-top: 67px; }
.nav a { height: 86px; display: flex; align-items: center; gap: 31px; font-size: 27px; }
.nav svg, .logout svg { width: 34px; height: 34px; fill: none; stroke: currentColor; stroke-width: 2.6; stroke-linejoin: round; stroke-linecap: round; }
.logout { margin: auto 0 50px; height: 40px; display: flex; align-items: center; gap: 31px; font-size: 22px; }
.content { flex: 1; min-width: 0; padding: 17px 13px 0 14px; }
.filters { height: 103px; padding: 0 13px; display: flex; align-items: center; gap: 14px; background: #deffdd; border-radius: 10px; font-size: 26px; color: #101820; }
.field { width: 343px; height: 76px; padding: 0 20px; border: 2px solid #cfd8dc; border-radius: 10px; background: #fff; font: 26px Inter, sans-serif; color: #3d4a57; }
.devices-label { margin-left: 12px; }
.select-wrap { position: relative; }
.select-wrap .field { width: 307px; appearance: none; color: #64707c; }
.select-wrap svg { position: absolute; right: 29px; top: 32px; width: 26px; height: 15px; fill: none; stroke: #4c5964; stroke-width: 2.6; pointer-events: none; }
.cards { margin: 66px 0 42px; display: grid; grid-template-columns: 1fr 1fr; gap: 28px; align-items: start; }
.card { border: 2px solid #e4e9eb; border-radius: 10px; background: #fff; }
.card-head { height: 94px; padding: 0 32px; display: flex; align-items: center; justify-content: space-between; background: #f8fcfd; border-bottom: 2px solid #e2e7e9; border-radius: 8px 8px 0 0; }
.card-head h2 { font-size: 27px; font-weight: 700; color: #313c47; }
.fold { width: 54px; height: 54px; display: grid; place-items: center; }
.fold::before { content: ""; width: 27px; height: 3px; background: #6b7785; }
.card-body { padding: 33px 32px 32px; }

/* map */
.map { position: relative; height: 666px; overflow: hidden; font-family: "Liberation Sans", Arial, sans-serif; font-size: 20px; }
.tiles { width: 100%; height: 100%; }
.shapes path { vector-effect: non-scaling-stroke; }
.place { font: 20px "Noto Sans", sans-serif; fill: #8a8780; }
.water { font-size: 18px; font-style: italic; font-weight: 500; fill: #5b93b8; }
.zoom { position: absolute; left: 18px; top: 18px; width: 55px; border: 3px solid #b7b9ac; border-radius: 6px; background: #fff; }
.zoom button { width: 100%; height: 49px; display: grid; place-items: center; }
.zoom button:first-child { height: 51px; border-bottom: 2px solid #ccc; }
.zoom svg { width: 20px; height: 20px; fill: none; stroke: #000; stroke-width: 3.5; }
.popup { position: absolute; left: 195px; top: 144px; width: 369px; padding: 12px 12px 10px; background: #fffffff2; border-radius: 6px; box-shadow: 0 2px 8px #0005; color: #222; }
.popup::after { content: ""; position: absolute; left: 100%; top: 244px; border: 8px solid #0000; border-left-color: #fff; }
.popup p { height: 30px; display: flex; align-items: center; gap: 5px; white-space: nowrap; }
.popup p:first-child { height: 32px; }
.popup a { text-decoration: underline; margin-left: 2px; }
.popup .em { width: 20px; height: 20px; }
.popup .updated { font-size: 18px; color: #868686; }
.popup .weather { margin-top: 30px; }
.net { width: 27px; height: 24px; color: #2cc968; }
.popup .net { margin-bottom: 6px; }
.em { width: 25px; height: 25px; flex: none; }
.credit { position: absolute; right: 0; bottom: 0; height: 28px; padding: 0 9px; display: flex; align-items: center; gap: 6px; background: #ffffffcc; color: #333; }
.credit svg { width: 20px; height: 14px; }
.credit a { color: #0078a8; }

/* summary */
.summary { padding: 46px 32px 27px; font-size: 23px; color: #384552; }
.badges { display: flex; gap: 13px; }
.badges span { height: 43px; padding: 0 13px; display: flex; align-items: center; background: #10a5e9; border-radius: 8px; color: #fff; font-size: 20px; font-weight: 700; }
.readings { margin-top: 33px; display: flex; flex-wrap: wrap; column-gap: 13px; }
.readings span, .now span, .range span { display: flex; align-items: center; gap: 5px; white-space: nowrap; }
.readings span { height: 45px; }
.readings .device { font-size: 20px; font-weight: 500; color: #55616d; }
.summary hr { height: 2px; margin: 53px 0 54px; border: 0; background: #e2e6e8; }
.summary h3 { font-size: 23px; line-height: 36px; font-weight: 500; color: #5f6b76; }
.now, .range { display: flex; height: 30px; gap: 40px; color: #5f6b76; }
.now .picked { gap: 0; }
.now { margin: -5px 0 24px; }
.range { margin: 6px 0 9px; gap: 13px; height: 38px; }
.range .apart { margin-left: 16px; }
mark { height: 31px; padding-left: 5px; background: #b3d7ff; color: inherit; }
.note { font-size: 20px; line-height: 40px; color: #5f6b76; }

/* charts */
.charts { display: grid; grid-template-columns: 1fr 1fr; gap: 27px; }
.chart { height: 740px; padding-top: 54px; border: 2px solid #f5f6f6; border-radius: 16px; font-family: "Liberation Sans", Arial, sans-serif; color: #5f6264; text-align: center; }
.chart figcaption { font-size: 27px; line-height: 40px; font-weight: 700; }
.legend { margin-top: 44px; height: 22px; display: flex; align-items: center; justify-content: center; gap: 6px; font-size: 20px; }
.key { width: 28px; height: 4px; }
.key.lilac { background: #e6b8eb; }
.key.magenta { background: #ea22c2; }
.plot { width: 100%; margin-top: -4px; }
.grid { fill: none; stroke: #e2e2e2; stroke-width: 2; }
.ticks { font-size: 20px; fill: #5f6264; text-anchor: end; }
.series polyline { fill: none; stroke-width: 3.5; }
.series.lilac { stroke: #e6b8eb; fill: #e6b8eb; }
.series.magenta { stroke: #ea22c2; fill: #ea22c2; }
.series circle { stroke: none; }

/* dock */
.dock { height: 83px; margin: 2px 55px 8px; padding: 0 11px 6px 9px; display: flex; align-items: center; justify-content: space-between; border: 2px solid #d88f84; border-radius: 24px; background: linear-gradient(90deg, #cb7069, #c47863 10%, #c67a66 40%, #cf6862 52%, #bd6f60 58%, #c86a62 70%, #b9685c 90%, #a85f55); }
.app { position: relative; width: 52px; height: 53px; border-radius: 12px; }
.app svg { width: 100%; height: 100%; }
.app.on::after { content: ""; position: absolute; left: 23px; bottom: -14px; width: 6px; height: 6px; border-radius: 50%; background: #501a18; }
.badge { position: absolute; right: -7px; top: -7px; width: 24px; height: 24px; border-radius: 50%; background: #f4443c; color: #fff; font-size: 14px; line-height: 24px; font-weight: 400; }
.lime { background: linear-gradient(#62f06a, #1fc635); }
.azure { background: linear-gradient(#1b79ee, #22b2f8); }
.white { background: #fff; }
.cream { background: #f4f3ee; }
.black { background: #111517; }
.rose { background: linear-gradient(#fb5c74, #f9303f); }
.orange { background: linear-gradient(#fba91c, #fb8a24); }
.gray { background: linear-gradient(#c3ccd2, #96a0a6); }
.coral { background: #ff6c37; }
.blush { background: #e6bdb9; }
.docker { background: #1c8ded; }
.atom { background: linear-gradient(#84cf86, #34a25b); }
.pycharm { background: linear-gradient(120deg, #1cc8f0 30%, #22d788 50%, #f6e34a 75%); }
.purple { background: #6d35a3; }
.indigo { background: #625df5; }
.silver { background: #d5d6d3; }
.dock-line { width: 2px; height: 60px; margin: 0 7px; background: #9a3f3a; }
.thumb { width: 54px; height: 58px; }
.bin { width: 46px; }
.may { font: 600 11px Inter, sans-serif; fill: #fff; text-anchor: middle; }
.day { font: 28px Inter, sans-serif; fill: #222; text-anchor: middle; }
.tv { font: 600 19px Inter, sans-serif; fill: #fff; text-anchor: middle; }
.prompt { font: 14px "Liberation Mono", monospace; fill: #2fe04b; }
.teams { font: 700 16px Inter, sans-serif; fill: #fff; text-anchor: middle; }
.pc { font: 700 16px Inter, sans-serif; fill: #fff; }
```
